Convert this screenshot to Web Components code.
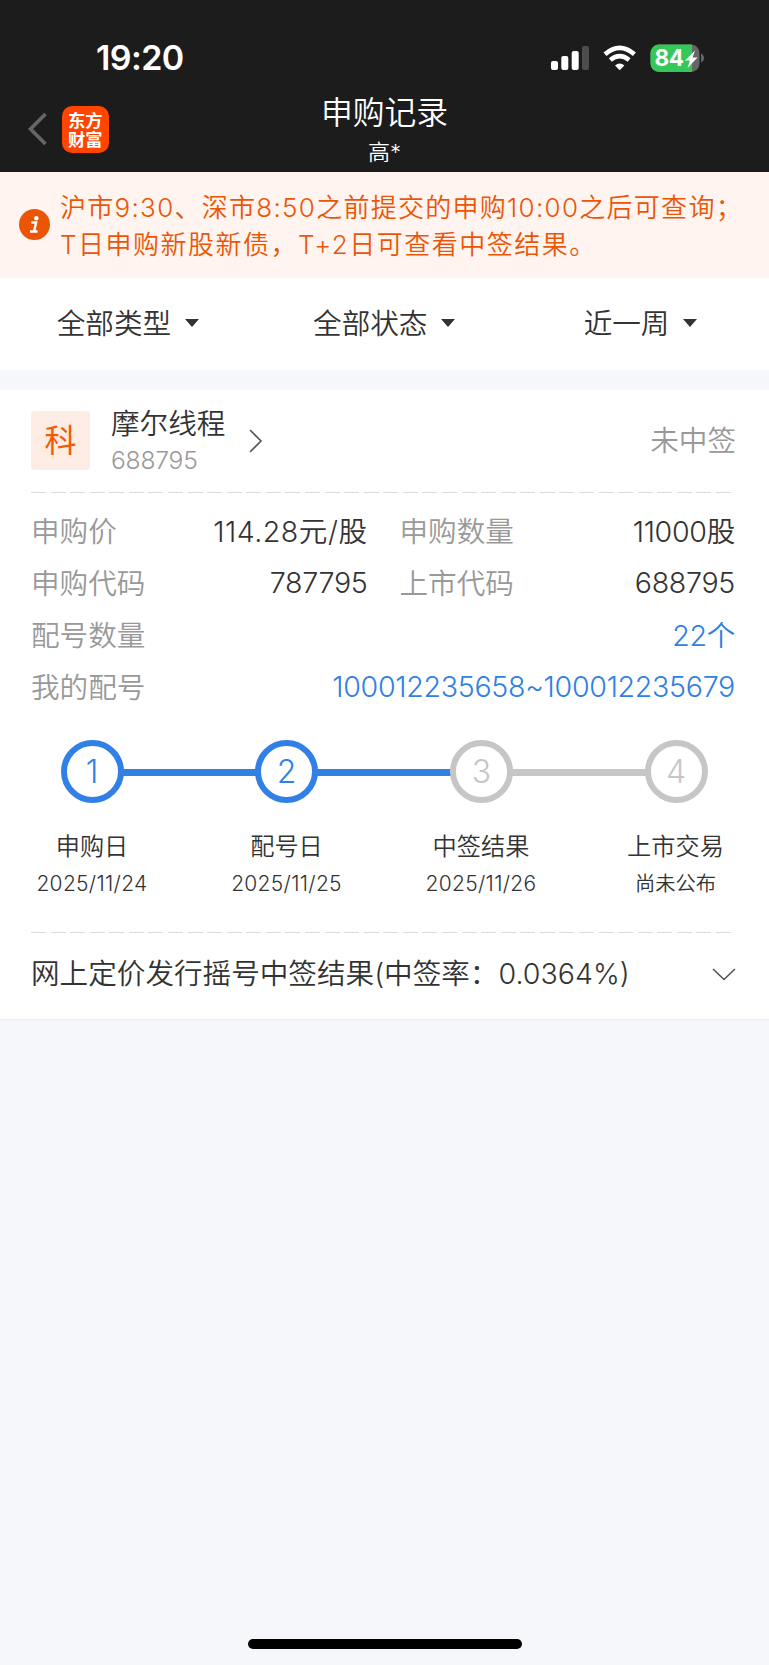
<!DOCTYPE html>
<html lang="zh-CN">
<head>
<meta charset="UTF-8">
<meta name="viewport" content="width=device-width, initial-scale=1">
<title>申购记录</title>
<style>
  body {
    margin: 0;
    background: #f6f7fa;
    color: #333;
    font-family: Inter, "Noto Sans CJK SC", sans-serif;
    font-weight: 350;
    font-size: 28.6px;
    --blue: #3080e5;
    --orange: #eb5606;
    --muted: #999;
  }
</style>
</head>
<body>
<record-page></record-page>
<script>
class StatusBar extends HTMLElement {
  connectedCallback() {
    this.attachShadow({ mode: 'open' });
    this.shadowRoot.innerHTML = `
      <style>
        :host {
            display: flex;
            justify-content: space-between;
            align-items: center;
            height: 47px;
            padding: 34px 65px 0 96px;
            color: #fff;
        }
        time {
            font-size: 34px;
            font-weight: 600;
            line-height: 47px;
            letter-spacing: -0.6px;
        }
        svg { display: block; }
      </style>
      <time>19:20</time>
      <svg width="154" height="30" viewBox="550 42 154 30">
        <g fill="#fff">
          <rect x="551" y="60" width="7" height="9" rx="2"/>
          <rect x="561.3" y="55" width="7" height="14" rx="2"/>
          <rect x="571.7" y="50" width="7" height="19" rx="2"/>
          <rect x="582" y="45" width="7" height="24" rx="2" opacity=".22"/>
          <path d="M619.7 69.2l-4.7-4.7q4.7-3.8 9.4 0z"/>
        </g>
        <path d="M605 53.2q14.7-12.6 29.4 0M610.3 59q9.4-7.6 18.8 0" fill="none" stroke="#fff" stroke-width="4.6"/>
        <clipPath id="cell"><rect x="650.5" y="43.6" width="49" height="27.4" rx="8.5"/></clipPath>
        <g clip-path="url(#cell)">
          <rect x="650" y="43" width="50" height="29" fill="#666"/>
          <rect x="650" y="43" width="42" height="29" fill="#34c759"/>
        </g>
        <path d="M701 52.5q3 1.5 3 4.5t-3 4.5z" fill="#666"/>
        <text x="654.5" y="65.3" font-size="22.5" font-weight="700" fill="#fff" textLength="29.5">84</text>
        <path d="M695 49.5l-10 10h5l-2.500 7.500 10-10.500h-5z" fill="#fff"/>
      </svg>
    `;
  }
}
customElements.define('status-bar', StatusBar);

class NavHeader extends HTMLElement {
  connectedCallback() {
    this.attachShadow({ mode: 'open' });
    this.shadowRoot.innerHTML = `
      <style>
        :host {
            display: grid;
            grid-template-columns: 200px 1fr 200px;
            height: 91px;
            color: #fff;
        }
        .left {
            display: flex;
            align-items: center;
            gap: 15px;
            height: 46.5px;
            padding: 25px 0 0 27px;
        }
        .logo {
            box-sizing: border-box;
            width: 46.5px;
            height: 46.5px;
            padding-top: 4px;
            border-radius: 10px;
            background: #ff4500;
            font: 700 17.3px/19px "Noto Sans CJK SC", sans-serif;
            text-align: center;
        }
        .titles { text-align: center; }
        h1 {
            margin: 13px 0 0;
            font-size: 31.8px;
            font-weight: inherit;
            line-height: 38px;
        }
        p {
            margin: 6px 0 0;
            font-size: 22px;
            line-height: 28px;
        }
      </style>
      <div class="left">
        <svg width="20" height="34" viewBox="0 0 20 34"><path d="M18.500 2L3.500 17l15 15" fill="none" stroke="#666" stroke-width="3.6"/></svg>
        <div class="logo">东方<br>财富</div>
      </div>
      <div class="titles">
        <h1><slot></slot></h1>
        <p><slot name="user"></slot></p>
      </div>
    `;
  }
}
customElements.define('nav-header', NavHeader);

class NoticeBanner extends HTMLElement {
  connectedCallback() {
    this.attachShadow({ mode: 'open' });
    this.shadowRoot.innerHTML = `
      <style>
        :host {
            display: flex;
            align-items: center;
            gap: 10.5px;
            height: 105.5px;
            padding-left: 18.5px;
            background: #fff4ef;
            color: var(--orange);
            font-size: 26px;
            line-height: 37.5px;
            white-space: nowrap;
        }
        svg { flex: none; }
        .text { padding-top: 3px; }
        ::slotted(p) { margin: 0; }
        ::slotted(p:first-child) { letter-spacing: 1.28px; }
        ::slotted(p:last-child) { letter-spacing: 1.5px; }
      </style>
      <svg width="31" height="31" viewBox="0 0 31 31">
        <circle cx="15.500" cy="15.500" r="15.500" fill="#eb5606"/>
        <circle cx="17.300" cy="9.200" r="2.200" fill="#fff"/>
        <path d="M12.300 13.500h4.800l-2 8.800M11 22.500h7.500" fill="none" stroke="#fff" stroke-width="2.400"/>
      </svg>
      <div class="text"><slot></slot></div>
    `;
  }
}
customElements.define('notice-banner', NoticeBanner);

class FilterBar extends HTMLElement {
  connectedCallback() {
    const items = this.getAttribute('items').split(',');
    this.attachShadow({ mode: 'open' });
    this.shadowRoot.innerHTML = `
      <style>
        :host {
            display: grid;
            grid-template-columns: repeat(3, 1fr);
            height: 92.5px;
            background: #fff;
        }
        div {
            display: flex;
            justify-content: center;
            align-items: center;
            gap: 13.5px;
            padding: 0 1px 4px 0;
        }
        i {
            border: 7px solid transparent;
            border-top: 8px solid #333;
            border-bottom: 0;
            margin-top: 2px;
        }
      </style>
      ${items.map(t => `<div><span>${t}</span><i></i></div>`).join('')}
    `;
  }
}
customElements.define('filter-bar', FilterBar);

class DashLine extends HTMLElement {
  connectedCallback() {
    this.attachShadow({ mode: 'open' });
    this.shadowRoot.innerHTML = `
      <style>
        :host {
            display: block;
            height: 1px;
            margin: 0 36px 0 31px;
            background: repeating-linear-gradient(90deg, #d9d9d9 0 15px, transparent 15px 19.57px);
        }
      </style>
    `;
  }
}
customElements.define('dash-line', DashLine);

class StockHead extends HTMLElement {
  connectedCallback() {
    this.attachShadow({ mode: 'open' });
    this.shadowRoot.innerHTML = `
      <style>
        :host {
            display: flex;
            align-items: center;
            height: 102px;
            padding: 0 33px 0 31px;
        }
        .tag {
            width: 59px;
            height: 59px;
            margin-right: 21px;
            border-radius: 4px;
            background: #fdece3;
            color: #f55a05;
            font-size: 32px;
            font-weight: 400;
            line-height: 59px;
            text-align: center;
        }
        .title { padding-top: 1px; }
        .name { line-height: 38px; }
        .code {
            color: var(--muted);
            font-size: 24.6px;
            line-height: 34px;
            letter-spacing: -0.2px;
        }
        svg { margin-left: 24px; }
        .state {
            margin-left: auto;
            padding-bottom: 4px;
            color: var(--muted);
        }
      </style>
      <div class="tag"><slot name="tag"></slot></div>
      <div class="title">
        <div class="name"><slot></slot></div>
        <div class="code"><slot name="code"></slot></div>
      </div>
      <svg width="14" height="24" viewBox="0 0 14 24"><path d="M1 1l11 11L1 23" fill="none" stroke="#555" stroke-width="1.6"/></svg>
      <div class="state"><slot name="state"></slot></div>
    `;
  }
}
customElements.define('stock-head', StockHead);

class InfoItem extends HTMLElement {
  connectedCallback() {
    this.attachShadow({ mode: 'open' });
    this.shadowRoot.innerHTML = `
      <style>
        :host {
            display: flex;
            justify-content: space-between;
            align-items: center;
            height: 51.8px;
            white-space: nowrap;
            letter-spacing: -0.3px;
        }
        :host([wide]) { grid-column: span 2; }
        .label { color: var(--muted); letter-spacing: 0; }
        :host([wide]) .value { color: var(--blue); }
        /* digit-only values sit a little high next to the labels */
        :host([digits]) .value { padding-top: 2px; }
      </style>
      <span class="label">${this.getAttribute('label')}</span>
      <span class="value"><slot></slot></span>
    `;
  }
}
customElements.define('info-item', InfoItem);

class StepProgress extends HTMLElement {
  connectedCallback() {
    const steps = this.getAttribute('steps').split(',').map(s => s.split('|'));
    const done = Number(this.getAttribute('done'));
    const track = steps.map((s, i) => {
      const on = i < done ? 'on' : '';
      const line = i < steps.length - 1 ? `<hr class="${on}">` : '';
      return `<b class="${on}">${i + 1}</b>${line}`;
    }).join('');
    this.attachShadow({ mode: 'open' });
    this.shadowRoot.innerHTML = `
      <style>
        :host { display: block; }
        .track {
            display: flex;
            align-items: center;
            padding: 0 61.5px 0 60.5px;
        }
        b {
            box-sizing: border-box;
            width: 63px;
            height: 63px;
            border: 6px solid #c6c6c6;
            border-radius: 50%;
            color: #c6c6c6;
            font-size: 32px;
            font-weight: 300;
            line-height: 52px;
            text-align: center;
        }
        b.on { border-color: var(--blue); color: var(--blue); }
        hr {
            flex: 1;
            height: 7.5px;
            margin: 2px -1px 0;
            border: 0;
            background: #c6c6c6;
        }
        hr.on { background: var(--blue); }
        .labels {
            display: flex;
            justify-content: space-between;
            margin-top: 25px;
            padding: 0 30.5px 0 29px;
        }
        .labels div {
            width: 126px;
            text-align: center;
            white-space: nowrap;
        }
        .labels p {
            margin: 0;
            font-size: 24.2px;
            line-height: 37px;
        }
        .labels small {
            display: block;
            font-size: 21px;
            line-height: 38px;
            letter-spacing: 0.3px;
        }
        .labels small.text {
            font-size: 20.3px;
            letter-spacing: 0;
        }
      </style>
      <div class="track">${track}</div>
      <div class="labels">
        ${steps.map(s => `<div><p>${s[0]}</p><small class="${/\d/.test(s[1]) ? '' : 'text'}">${s[1]}</small></div>`).join('')}
      </div>
    `;
  }
}
customElements.define('step-progress', StepProgress);

class ResultRow extends HTMLElement {
  connectedCallback() {
    this.attachShadow({ mode: 'open' });
    this.shadowRoot.innerHTML = `
      <style>
        :host {
            display: flex;
            justify-content: space-between;
            align-items: center;
            box-sizing: border-box;
            height: 86px;
            padding: 0 33px 4px 31px;
            white-space: nowrap;
        }
        span { padding-bottom: 4px; }
      </style>
      <span><slot></slot></span>
      <svg width="24" height="14" viewBox="0 0 24 14"><path d="M1 2l11 10.500L23 2" fill="none" stroke="#555" stroke-width="1.600"/></svg>
    `;
  }
}
customElements.define('result-row', ResultRow);

class RecordPage extends HTMLElement {
  connectedCallback() {
    this.attachShadow({ mode: 'open' });
    this.shadowRoot.innerHTML = `
      <style>
        :host {
            display: flex;
            flex-direction: column;
            height: 1665px;
        }
        header { background: #1c1c1c; }
        .card {
            margin-top: 19.5px;
            background: #fff;
            border-bottom: 1px solid #eee;
        }
        .info {
            display: grid;
            grid-template-columns: 336.5px 335.5px;
            column-gap: 32px;
            padding: 11.5px 0 0 31px;
        }
        .price { letter-spacing: 0.5px; }
        step-progress { margin: 29px 0 28.5px; }
        .home {
            width: 274px;
            height: 10px;
            margin: auto auto 16px;
            border-radius: 5px;
            background: #000;
        }
      </style>
      <header>
        <status-bar></status-bar>
        <nav-header>申购记录<span slot="user">高*</span></nav-header>
      </header>
      <notice-banner>
        <p>沪市9:30、深市8:50之前提交的申购10:00之后可查询；</p>
        <p>T日申购新股新债，T+2日可查看中签结果。</p>
      </notice-banner>
      <filter-bar items="全部类型,全部状态,近一周"></filter-bar>
      <section class="card">
        <stock-head>
          <span slot="tag">科</span>摩尔线程<span slot="code">688795</span><span slot="state">未中签</span>
        </stock-head>
        <dash-line></dash-line>
        <div class="info">
          <info-item class="price" label="申购价">114.28元/股</info-item>
          <info-item label="申购数量">11000股</info-item>
          <info-item digits label="申购代码">787795</info-item>
          <info-item digits label="上市代码">688795</info-item>
          <info-item label="配号数量" wide>22个</info-item>
          <info-item digits label="我的配号" wide>100012235658~100012235679</info-item>
        </div>
        <step-progress done="2" steps="申购日|2025/11/24,配号日|2025/11/25,中签结果|2025/11/26,上市交易|尚未公布"></step-progress>
        <dash-line></dash-line>
        <result-row>网上定价发行摇号中签结果(中签率：0.0364%)</result-row>
      </section>
      <div class="home"></div>
    `;
  }
}
customElements.define('record-page', RecordPage);
</script>
</body>
</html>
